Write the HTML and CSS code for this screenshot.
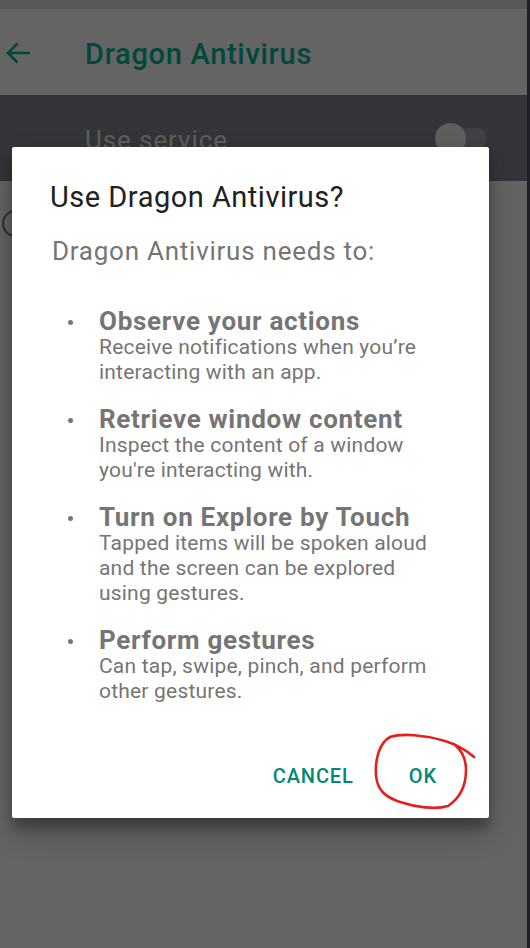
FILE: index.html
```html
<!DOCTYPE html>
<html>
<head>
<meta charset="utf-8">
<link rel="stylesheet" href="styles.css">
</head>
<body>
<div class="screen">
  <div class="statusbar"></div>
  <header class="appbar">
    <svg class="back" width="26" height="24" viewBox="0 0 26 24"><path d="M25 12H3M12.5 2.5L3 12l9.5 9.5" fill="none" stroke="#00483b" stroke-width="2.6"/></svg>
    <h1 class="apptitle">Dragon Antivirus</h1>
  </header>
  <div class="service">
    <span class="service-label">Use service</span>
    <span class="toggle"><span class="track"></span><span class="thumb"></span></span>
  </div>
  <div class="content">
    <span class="radio"></span>
  </div>
  <div class="edge"></div>

  <div class="dialog">
    <h2 class="d-title">Use Dragon Antivirus?</h2>
    <p class="d-sub">Dragon Antivirus needs to:</p>
    <ul class="perms">
      <li class="perm">
        <div class="p-title">Observe your actions</div>
        <div class="p-desc">Receive notifications when you’re<br>interacting with an app.</div>
      </li>
      <li class="perm">
        <div class="p-title">Retrieve window content</div>
        <div class="p-desc">Inspect the content of a window<br>you're interacting with.</div>
      </li>
      <li class="perm">
        <div class="p-title">Turn on Explore by Touch</div>
        <div class="p-desc">Tapped items will be spoken aloud<br>and the screen can be explored<br>using gestures.</div>
      </li>
      <li class="perm">
        <div class="p-title">Perform gestures</div>
        <div class="p-desc">Can tap, swipe, pinch, and perform<br>other gestures.</div>
      </li>
    </ul>
    <div class="actions">
      <span class="btn">CANCEL</span>
      <span class="btn">OK</span>
    </div>
  </div>

  <svg class="scribble" width="530" height="948" viewBox="0 0 530 948">
    <path d="M474 757 C466 750 458 745 445 741 C425 735 402 733 390 737 C379 743 375 760 376 775 C377 790 385 797 400 802 C415 807 435 810 448 806 C460 798 466 785 466 770 C466 760 463 752 456 746" fill="none" stroke="#e3201f" stroke-width="2.6" stroke-linecap="round" stroke-linejoin="round"/>
  </svg>
</div>
</body>
</html>
```

FILE: styles.css
```css
* { box-sizing: border-box; }
html, body {
  margin: 0;
  padding: 0;
  background: #646464;
  font-family: Roboto, "Noto Sans", sans-serif;
}
.screen {
  position: relative;
  width: 530px;
  height: 948px;
  overflow: hidden;
  background: #646464;
}
.statusbar {
  height: 9px;
  background: #585858;
}
.appbar {
  height: 86px;
  background: #646464;
  display: flex;
  align-items: center;
  padding-left: 5px;
}
.back {
  display: block;
  margin-top: 2px;
}
.apptitle {
  margin: 4px 0 0 54px;
  font-size: 29px;
  letter-spacing: 0.7px;
  font-weight: 500;
  color: #00483b;
  line-height: 32px;
}
.service {
  height: 86px;
  background: #333538;
  display: flex;
  align-items: center;
  padding-left: 85px;
  padding-right: 43px;
  justify-content: space-between;
}
.service-label {
  font-size: 26px;
  letter-spacing: 0.9px;
  color: #5d5e5f;
  margin-top: 4px;
}
.toggle {
  position: relative;
  width: 52px;
  height: 31px;
  margin-top: 0;
}
.track {
  position: absolute;
  left: 15px;
  top: 5px;
  width: 37px;
  height: 20px;
  border-radius: 10px;
  background: #3f4144;
}
.thumb {
  position: absolute;
  left: 0;
  top: 0;
  width: 31px;
  height: 31px;
  border-radius: 50%;
  background: #5e5e5e;
}
.content {
  padding-top: 29px;
}
.radio {
  display: block;
  margin-left: 2px;
  width: 27px;
  height: 27px;
  border: 2.5px solid #2f2f2f;
  border-radius: 50%;
}
.edge {
  position: absolute;
  top: 0;
  right: 0;
  width: 3px;
  height: 948px;
  background: #1e1f2b;
}
.dialog {
  position: absolute;
  left: 12px;
  top: 147px;
  width: 477px;
  height: 671px;
  background: #fff;
  border-radius: 2px;
  box-shadow: 0 14px 28px rgba(0,0,0,0.28), 0 10px 10px rgba(0,0,0,0.2);
  padding-top: 34px;
}
.d-title {
  margin: 0;
  padding-left: 38px;
  font-size: 29px;
  letter-spacing: 0.5px;
  line-height: 32px;
  font-weight: 400;
  color: #212121;
}
.d-sub {
  margin: 23px 0 0;
  padding-left: 40px;
  font-size: 26px;
  letter-spacing: 0.75px;
  line-height: 30px;
  color: #757575;
}
.perms {
  list-style: none;
  margin: 41px 0 0;
  padding: 0 0 0 87px;
  display: flex;
  flex-direction: column;
  gap: 20px;
}
.perm {
  position: relative;
}
.perm::before {
  content: "";
  position: absolute;
  left: -31px;
  top: 13px;
  width: 5px;
  height: 5px;
  border-radius: 50%;
  background: #757575;
}
.p-title {
  font-size: 26px;
  letter-spacing: 0.7px;
  line-height: 28px;
  font-weight: 700;
  color: #757575;
}
.p-desc {
  font-size: 21px;
  letter-spacing: 0.2px;
  line-height: 25px;
  color: #757575;
}
.actions {
  display: flex;
  justify-content: flex-end;
  gap: 55px;
  padding-right: 52px;
  margin-top: 60px;
}
.btn {
  font-size: 20px;
  letter-spacing: 0.9px;
  line-height: 24px;
  font-weight: 500;
  color: #00887a;
}
.scribble {
  position: absolute;
  left: 0;
  top: 0;
}
```
